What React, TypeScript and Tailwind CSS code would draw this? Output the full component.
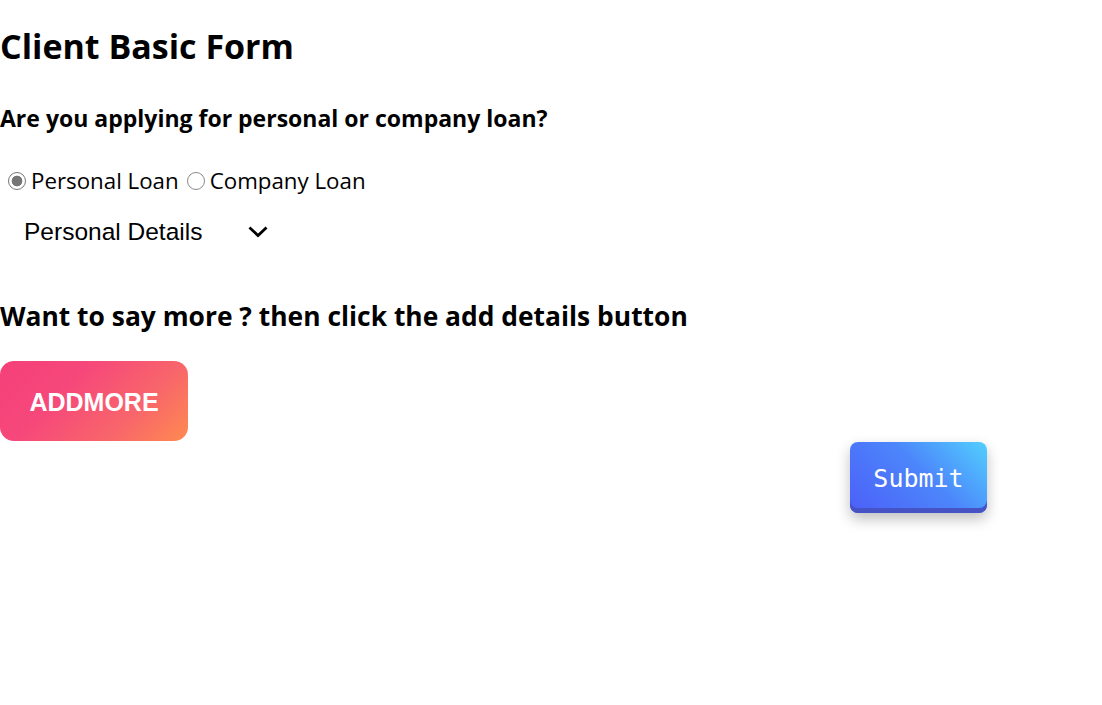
import { useState } from "react";

const radioCls =
  "h-[18px] w-[18px] appearance-none rounded-full border-[1.5px] border-[#8a8a8a] bg-white checked:border-[#767676] checked:bg-[radial-gradient(circle,#767676_0,#767676_5px,white_5.7px)]";

const App = () => {
  const [loan, setLoan] = useState("personal");

  return (
    <div className="min-h-screen bg-white text-black font-['Open_Sans',sans-serif]">
      {/* Header */}
      <h1 className="pt-[21px] text-[34px] leading-[50px] font-bold">Client Basic Form</h1>
      <h3 className="mt-[32px] text-[23px] leading-[30px] font-bold">
        Are you applying for personal or company loan?
      </h3>

      {/* Loan type */}
      <div className="mt-[35px] flex items-center text-[22.3px] leading-[26px]">
        <label className="flex items-center">
          <input
            type="radio"
            name="loan"
            checked={loan === "personal"}
            onChange={() => setLoan("personal")}
            className={`ml-[8px] mr-[5px] ${radioCls}`}
          />
          Personal Loan
        </label>
        <label className="ml-[8px] flex items-center">
          <input
            type="radio"
            name="loan"
            checked={loan === "company"}
            onChange={() => setLoan("company")}
            className={`mr-[5px] ${radioCls}`}
          />
          Company Loan
        </label>
      </div>

      {/* Details select */}
      <div className="mt-[21px] ml-[24px] flex w-[244px] items-center justify-between font-['Liberation_Sans',sans-serif] text-[24.5px] leading-[34px]">
        <span>Personal Details</span>
        <svg width="20" height="12" viewBox="0 0 20 12" fill="none" stroke="black" strokeWidth="2.8" strokeLinecap="square" strokeLinejoin="miter">
          <path d="M2.5 2.5L10 9.5L17.5 2.5" />
        </svg>
      </div>

      <h2 className="mt-[49px] text-[26.4px] leading-[36px] font-bold">
        Want to say more ? then click the add details button
      </h2>

      {/* Actions */}
      <button className="mt-[27px] flex h-[80px] w-[188px] items-center justify-center rounded-[14px] bg-[linear-gradient(135deg,#f5407a_0%,#f6487a_35%,#f8666a_70%,#ff8a50_100%)] pt-[3px] font-['Liberation_Sans',sans-serif] text-[25px] font-bold text-white">
        ADDMORE
      </button>
      <div className="mt-[1px] flex w-[987px] justify-end">
        <button className="flex h-[71px] w-[137px] items-center justify-center rounded-[8px] bg-[linear-gradient(225deg,#52cffe_0%,#4c86fb_45%,#4c5ff8_100%)] pt-[2px] font-['DejaVu_Sans_Mono',monospace] text-[25px] text-white shadow-[inset_0_-5px_0_#4653c4,0_6px_14px_rgba(0,0,0,0.25)]">
          Submit
        </button>
      </div>
    </div>
  );
};

export default App;
